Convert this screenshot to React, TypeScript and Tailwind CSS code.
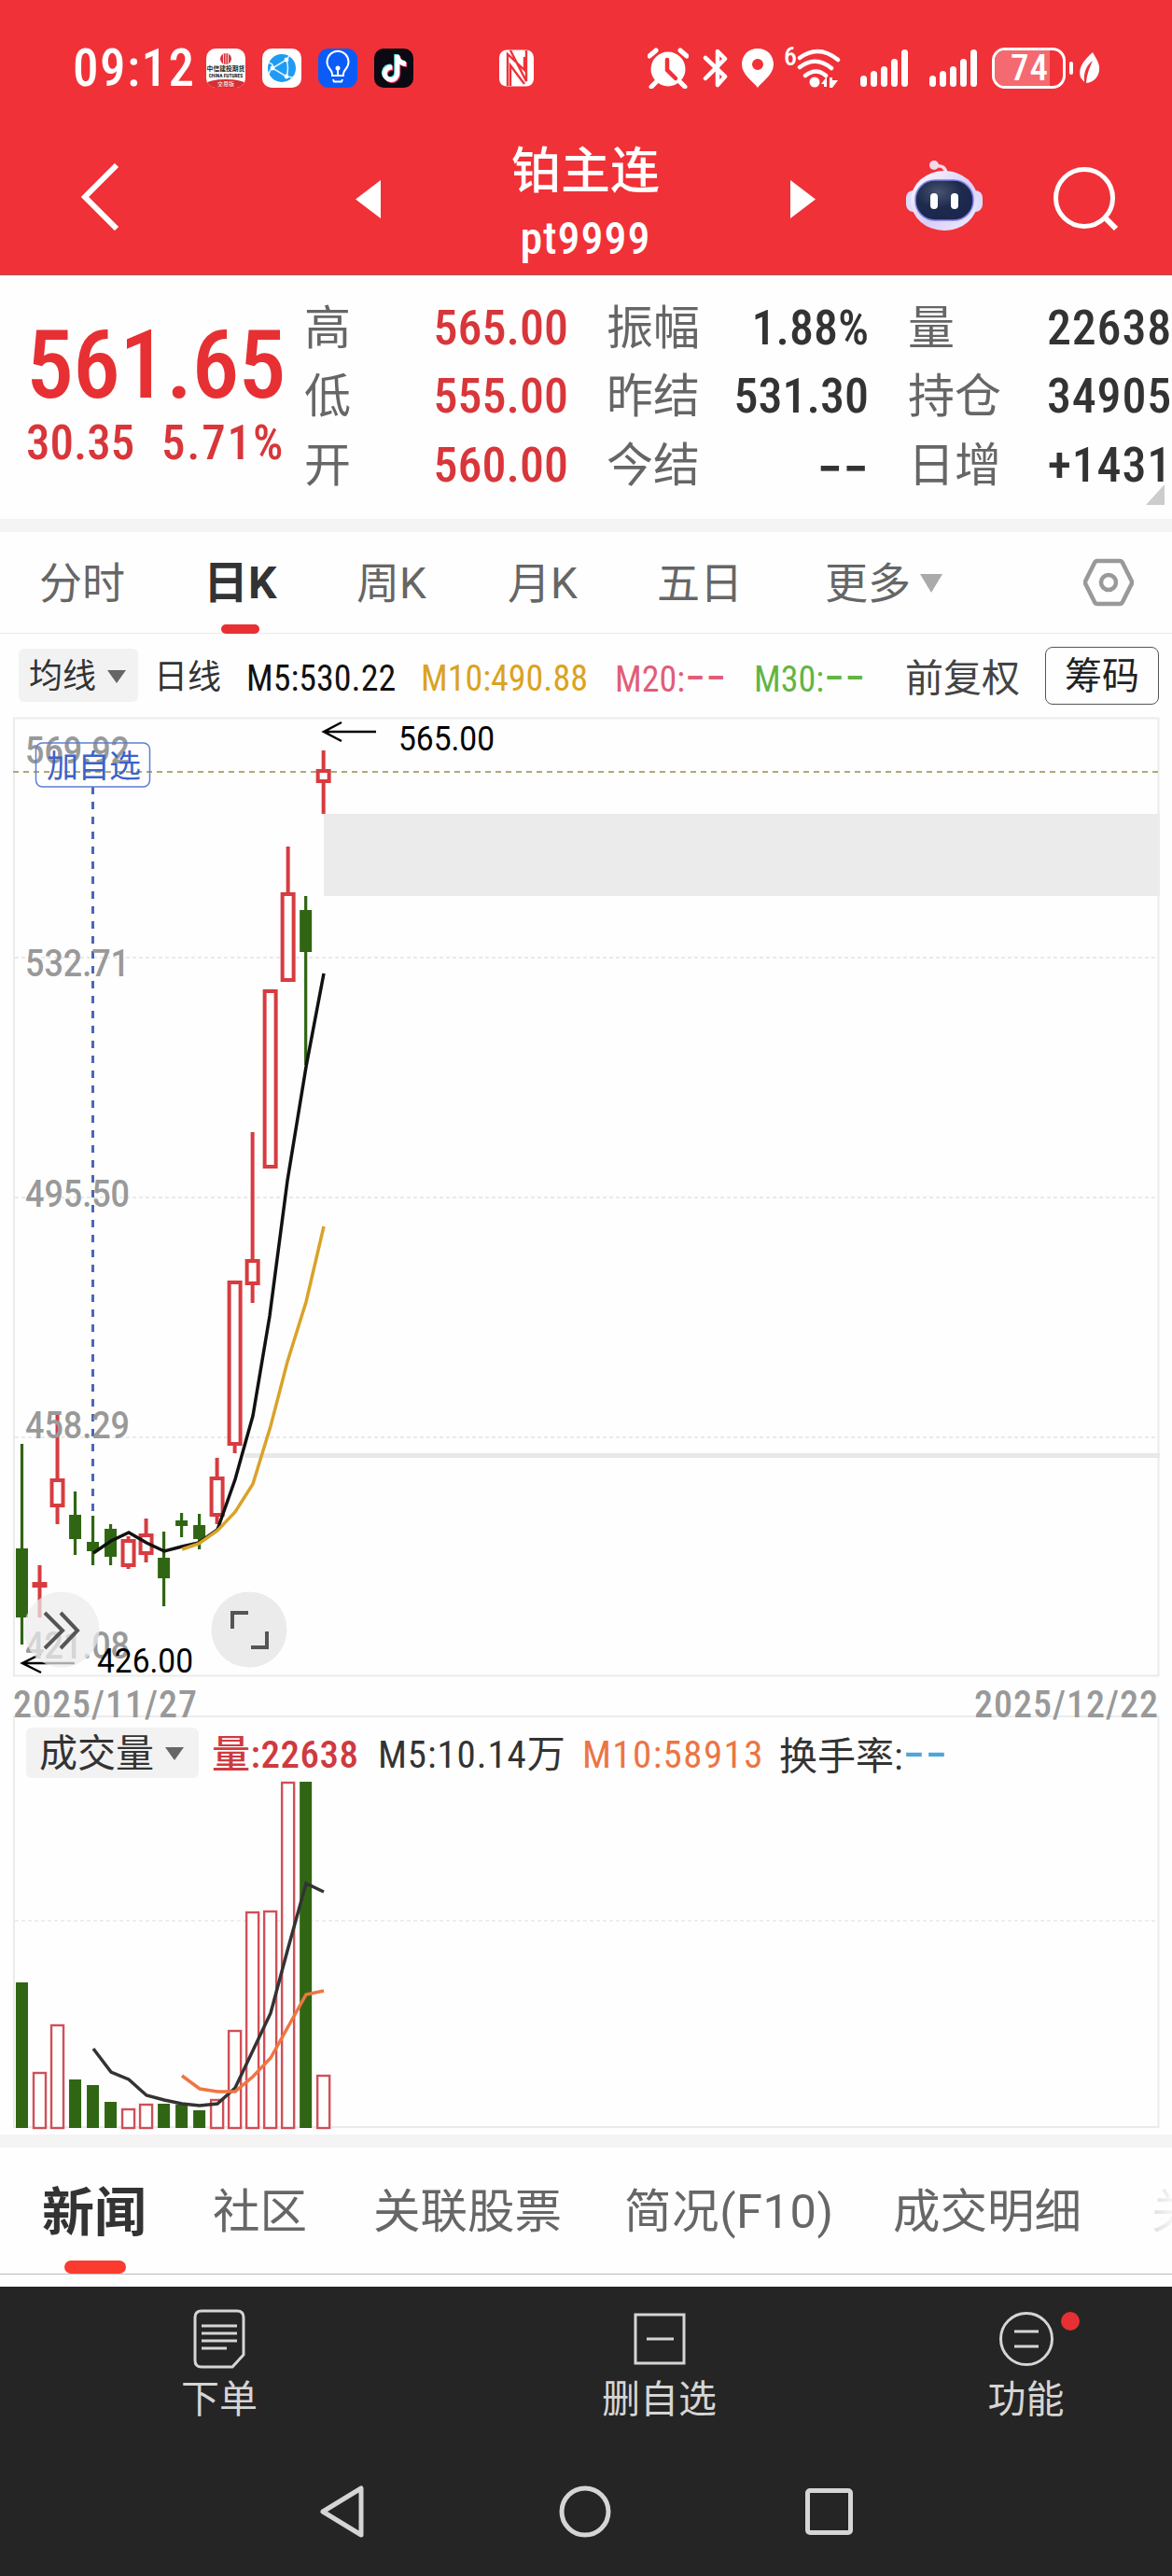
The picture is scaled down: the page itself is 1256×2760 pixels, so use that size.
import { FaTiktok } from "react-icons/fa6";

type Candle = {
  up: boolean;
  high: number;
  low: number;
  top: number;
  bottom: number;
  vol: number;
};

const RED = "#d63c40";
const GREEN = "#306613";

const candles: Candle[] = [
  { up: false, high: 1547, low: 1762, top: 1659, bottom: 1733, vol: 2124 },
  { up: true, high: 1677, low: 1733, top: 1695, bottom: 1701, vol: 2220 },
  { up: true, high: 1515, low: 1633, top: 1584, bottom: 1615, vol: 2169 },
  { up: false, high: 1598, low: 1666, top: 1623, bottom: 1649, vol: 2228 },
  { up: false, high: 1624, low: 1677, top: 1652, bottom: 1662, vol: 2234 },
  { up: false, high: 1633, low: 1677, top: 1638, bottom: 1668, vol: 2252 },
  { up: true, high: 1646, low: 1681, top: 1649, bottom: 1679, vol: 2259 },
  { up: true, high: 1627, low: 1674, top: 1643, bottom: 1666, vol: 2254 },
  { up: false, high: 1641, low: 1721, top: 1669, bottom: 1691, vol: 2254 },
  { up: false, high: 1621, low: 1647, top: 1629, bottom: 1635, vol: 2255 },
  { up: false, high: 1622, low: 1660, top: 1634, bottom: 1649, vol: 2261 },
  { up: true, high: 1562, low: 1633, top: 1582, bottom: 1625, vol: 2249 },
  { up: true, high: 1372, low: 1557, top: 1372, bottom: 1549, vol: 2175 },
  { up: true, high: 1213, low: 1396, top: 1349, bottom: 1377, vol: 2048 },
  { up: true, high: 1060, low: 1252, top: 1060, bottom: 1252, vol: 2047 },
  { up: true, high: 907, low: 1052, top: 956, bottom: 1052, vol: 1909 },
  { up: false, high: 960, low: 1141, top: 975, bottom: 1020, vol: 1909 },
  { up: true, high: 804, low: 872, top: 824, bottom: 839, vol: 2223 },
];

const cx = (i: number) => 23.5 + i * 19.01;

const quotes = [
  ["高", "565.00", "振幅", "1.88%", "量", "22638"],
  ["低", "555.00", "昨结", "531.30", "持仓", "34905"],
  ["开", "560.00", "今结", "--", "日增", "+1431"],
];

const priceLabels = [
  { text: "569.92", y: 818 },
  { text: "532.71", y: 1046 },
  { text: "495.50", y: 1293 },
  { text: "458.29", y: 1541 },
  { text: "421.08", y: 1777 },
];

function Dashes({ className }: { className?: string }) {
  return <span className={`[font-family:Inter,sans-serif] ${className ?? ""}`}>--</span>;
}

function Caret({ className }: { className?: string }) {
  return (
    <svg viewBox="0 0 20 14" preserveAspectRatio="none" className={className}>
      <path d="M0 0h20L10 14z" fill="currentColor" />
    </svg>
  );
}

function Signal() {
  return (
    <svg width="52" height="42" viewBox="0 0 52 42" fill="#fff">
      <rect x="0" y="29" width="7" height="12" rx="3.5" />
      <rect x="11" y="24" width="7" height="17" rx="3.5" />
      <rect x="22" y="19" width="7" height="22" rx="3.5" />
      <rect x="33" y="11" width="7" height="30" rx="3.5" />
      <rect x="44" y="1" width="7" height="40" rx="3.5" />
    </svg>
  );
}

function StatusBar() {
  return (
    <div className="flex h-[46px] items-center pl-[78px] text-white">
      <span className="w-[143px] text-[55px] leading-none font-medium tracking-[1.5px] font-stretch-[85%]">09:12</span>
      <div className="flex w-[314px] gap-[18px]">
        <div className="flex size-[42px] flex-col items-center overflow-hidden rounded-[10px] bg-white">
          <svg width="14" height="12" viewBox="0 0 14 12" className="mt-[5px] shrink-0">
            <circle cx="7" cy="6" r="6" fill="#d8323c" />
            <path d="M4.5 1v10M7 0v12M9.5 1v10" stroke="#fff" strokeWidth=".8" />
          </svg>
          <span className="mt-[2px] text-[6.8px] leading-[7px] font-bold whitespace-nowrap text-[#222]">中信建投期货</span>
          <span className="text-[5.500px] leading-[6px] font-bold whitespace-nowrap text-[#222] font-stretch-[85%]">CHINA FUTURES</span>
          <span className="mt-px w-full rounded-t-[50%] bg-[#d63035] text-center text-[6px] leading-[10px]">交易版</span>
        </div>
        <svg width="42" height="42" viewBox="0 0 42 42">
          <rect width="42" height="42" rx="10" fill="#fff" />
          <circle cx="21" cy="21" r="15" fill="#1f9bf3" />
          <g stroke="#d9f1ff" strokeWidth="1.6" fill="none">
            <path d="M26 12 11 21l15 9M26 12q3 9 0 18M7 15q6 2 4 6M11 21q-3 2-4 7M26 12l3-4M26 30l7 1" />
          </g>
          <g fill="#fff">
            <circle cx="26" cy="12" r="2.4" />
            <circle cx="11" cy="21" r="2.4" />
            <circle cx="26" cy="30" r="2.4" />
          </g>
        </svg>
        <svg width="42" height="42" viewBox="0 0 42 42" fill="none" stroke="#fff" strokeWidth="2">
          <rect width="42" height="42" rx="11" fill="#0b5cf7" stroke="none" />
          <path d="M15 29v-2q0-2-2.500-5a11.500 11.500 0 1 1 17 0q-2.500 3-2.500 5v2zM16 33l1 2.500h8l1-2.500M21 22v7" />
          <circle cx="21" cy="21" r="2.500" fill="#fff" stroke="none" />
        </svg>
        <div className="relative size-[42px] rounded-[10px] bg-[#0b0912]">
          <FaTiktok className="absolute top-[6px] left-[6px] size-[29px] text-[#5fe6e0]" />
          <FaTiktok className="absolute top-[8px] left-[8px] size-[29px] text-[#f0386b]" />
          <FaTiktok className="absolute top-[7px] left-[7px] size-[29px] text-white" />
        </div>
      </div>
      <svg width="38" height="40" viewBox="0 0 38 40">
        <rect width="37" height="39" rx="8" y=".5" fill="#fff" />
        <path d="M9 39V5l18 17V8M12 1l17 33V1M12 39V17l15 20" fill="none" stroke="#f03138" strokeWidth="2.4" />
      </svg>
      <svg width="44" height="44" viewBox="0 0 44 44" className="ml-[121px]">
        <circle cx="22" cy="23" r="18.500" fill="#fff" />
        <path d="M2 9l7-6M42 9l-7-6M9 37l-5 5M35 37l5 5" stroke="#fff" strokeWidth="5" strokeLinecap="round" />
        <path d="M21 13v11l9 9" fill="none" stroke="#f03138" strokeWidth="4.500" strokeLinecap="round" />
      </svg>
      <svg width="28" height="44" viewBox="0 0 28 44" className="ml-[15px]" fill="none" stroke="#fff" strokeWidth="4.500" strokeLinejoin="round" strokeLinecap="round">
        <path d="M3 11l21 20-8 9V4l8 8L3 33" />
      </svg>
      <svg width="34" height="42" viewBox="0 0 34 42" className="ml-[14px]">
        <path fillRule="evenodd" d="M17 0C7 0 0 7 0 17c0 11 12 18 17 25 5-7 17-14 17-25C34 7 27 0 17 0zm0 11a6 6 0 1 1 0 12 6 6 0 0 1 0-12z" fill="#fff" />
      </svg>
      <span className="-mt-[24px] ml-[11px] w-[14px] text-[28px] leading-none font-medium font-stretch-[85%]">6</span>
      <svg width="48" height="44" viewBox="0 0 48 44" fill="none" stroke="#fff" strokeWidth="4.500">
        <path d="M3 11q20-15 41 2M3 21q17-13 34 1M9 30q12-9 22 0" strokeLinecap="round" />
        <circle cx="19" cy="37" r="5.500" fill="#fff" stroke="none" />
        <path d="M26 39l6-8v11h-3v-3zM35 32h3v3h6l-6 8h-3z" fill="#fff" stroke="none" />
      </svg>
      <div className="ml-[20px] flex gap-[22px]">
        <Signal />
        <Signal />
      </div>
      <div className="ml-[15px] flex h-[44px] w-[79px] overflow-hidden rounded-[14px] border-[3px] border-white">
        <div className="flex w-[59px] items-center bg-[#f56a70] pl-[17px] text-[39px] leading-none font-medium tracking-[1px] font-stretch-[85%]">74</div>
      </div>
      <div className="ml-[4px] h-[14px] w-[4px] rounded-full bg-white" />
      <svg width="22" height="34" viewBox="0 0 22 34" className="ml-[7px]" fill="#fff">
        <path d="M14 0C4 9-2 17 1 27l4 5C4 20 8 14 14 9 11 16 8 22 7 33c10-1 15-9 14-18C20 9 17 6 14 0z" />
      </svg>
    </div>
  );
}

function Robot() {
  return (
    <svg width="82" height="80" viewBox="0 0 82 80">
      <defs>
        <linearGradient id="shell" x1="0" y1="0" x2="1" y2="1">
          <stop offset="0" stopColor="#ffffff" />
          <stop offset=".55" stopColor="#d9cdf7" />
          <stop offset="1" stopColor="#eef1ff" />
        </linearGradient>
        <radialGradient id="visor" cx=".4" cy=".3" r=".8">
          <stop offset="0" stopColor="#47536f" />
          <stop offset=".5" stopColor="#1e2a4c" />
          <stop offset="1" stopColor="#1b2450" />
        </radialGradient>
      </defs>
      <circle cx="30" cy="6" r="5" fill="#f0d9ea" />
      <path d="M31 7q11-2 12 8" fill="none" stroke="#f3dbe8" strokeWidth="3.500" />
      <rect x="0" y="33" width="82" height="23" rx="8" fill="#dcdcfa" />
      <ellipse cx="41" cy="44" rx="36" ry="32" fill="url(#shell)" />
      <rect x="10" y="22" width="62" height="43" rx="21" fill="url(#visor)" stroke="#7c7fe0" strokeWidth="1.500" />
      <rect x="26" y="36" width="8" height="17" rx="4" fill="#fff" />
      <rect x="48" y="36" width="8" height="17" rx="4" fill="#fff" />
    </svg>
  );
}

function Header() {
  return (
    <header className="h-[295px] border-b border-[#b2504f] bg-[#f03138] pt-[50px] text-white">
      <StatusBar />
      <div className="mt-[47px] flex h-[152px] pl-[86px]">
        <svg width="42" height="72" viewBox="0 0 42 72" className="mt-[32px]" fill="none" stroke="#fff" strokeWidth="6">
          <path d="M39 2 5 36l34 34" />
        </svg>
        <svg width="27" height="41" viewBox="0 0 27 41" className="mt-[50px] ml-[253px]" fill="#fff">
          <path d="M27 0v41L0 20.500z" />
        </svg>
        <div className="w-[439px] text-center">
          <div className="mt-[9px] text-[53px] leading-[64px] font-medium">铂主连</div>
          <div className="mt-[4px] text-[48px] leading-[72px] font-medium tracking-[1px] font-stretch-[85%]">pt9999</div>
        </div>
        <svg width="27" height="41" viewBox="0 0 27 41" className="mt-[50px]" fill="#fff">
          <path d="M0 0v41l27-20.500z" />
        </svg>
        <div className="mt-[28px] ml-[97px]">
          <Robot />
        </div>
        <svg width="72" height="72" viewBox="0 0 72 72" className="mt-[34px] ml-[74px]" fill="none" stroke="#fff" strokeWidth="5">
          <circle cx="35" cy="35" r="30.500" />
          <path d="M57 56l12 12" strokeWidth="6" />
        </svg>
      </div>
    </header>
  );
}

function Quotes() {
  return (
    <section className="relative flex h-[261px] bg-[#fefefe]">
      <div className="w-[326px] pl-[28px] text-[#e73033]">
        <div className="mt-[48px] text-[102px] leading-[96px] font-medium tracking-[-1px] whitespace-nowrap font-stretch-[85%]">561.65</div>
        <div className="mt-[8px] flex text-[51px] leading-[56px] whitespace-nowrap text-[#d8363a] font-stretch-[85%]">
          <span className="w-[145px] font-medium">30.35</span>
          <span className="font-medium tracking-[1.8px]">5.71%</span>
        </div>
      </div>
      <div className="flex flex-1 flex-col pt-[20px]">
        {quotes.map((row) => (
          <div
            key={row[0]}
            className="grid h-[73.500px] grid-cols-[80px_203px_41px_100px_181px_42px_110px_173px] items-center text-[50px] leading-none whitespace-nowrap text-[#666]"
          >
            <span>{row[0]}</span>
            <span className="text-right text-[52px] font-medium text-[#d8363a] font-stretch-[85%]">{row[1]}</span>
            <span />
            <span>{row[2]}</span>
            <span className="text-right text-[52px] font-medium text-[#333] font-stretch-[85%]">
              {row[3] === "--" ? <Dashes className="text-[60px]" /> : row[3]}
            </span>
            <span />
            <span>{row[4]}</span>
            <span className="text-right text-[52px] font-medium tracking-[0.8px] text-[#333] font-stretch-[85%]">{row[5]}</span>
          </div>
        ))}
      </div>
      <svg width="20" height="22" viewBox="0 0 20 22" className="absolute right-[8px] bottom-[15px]">
        <path d="M20 0v22H0z" fill="#ccc" />
      </svg>
    </section>
  );
}

function PeriodTabs() {
  return (
    <nav className="flex h-[109px] items-center border-b border-[#e8e8e8] bg-[#fefefe] text-[46px] leading-none text-[#666]">
      <div className="grid w-[1161px] grid-cols-[176px_164px_162px_160px_180px_auto] items-center pt-px pl-[42px]">
        <span>分时</span>
        <span className="relative text-[48px] font-bold text-[#333]">
          日K
          <i className="absolute -bottom-[30px] left-[19px] h-[10px] w-[41px] rounded-full bg-[#e73033]" />
        </span>
        <span>周K</span>
        <span>月K</span>
        <span>五日</span>
        <span className="flex items-center">
          更多
          <Caret className="ml-[10px] h-[20px] w-[24px] text-[#aaa]" />
        </span>
      </div>
      <svg width="54" height="52" viewBox="0 0 54 52" fill="none" stroke="#999" strokeWidth="4.500" strokeLinejoin="round">
        <path d="M15 3h24q2 0 3 2l9 18q2 3 0 6l-9 18q-1 2-3 2H15q-2 0-3-2L3 29q-2-3 0-6L12 5q1-2 3-2z" />
        <circle cx="27" cy="26" r="8" />
      </svg>
    </nav>
  );
}

function AverageRow() {
  return (
    <div className="flex h-[89px] items-center bg-[#fefefe] pl-[20px] text-[38px] leading-[44px] whitespace-nowrap text-[#333] font-stretch-[85%]">
      <div className="flex h-[57px] w-[128px] items-center rounded-[6px] bg-[#f2f2f2] pt-[2px] pl-[11px] text-[36px]">
        均线
        <Caret className="ml-[12px] h-[14px] w-[20px] text-[#666]" />
      </div>
      <span className="w-[98px] pt-[4px] pl-[17px] text-[36px]">日线</span>
      <span className="w-[187px] pt-[6px] pl-[18px] text-[#111]">M5:530.22</span>
      <span className="w-[208px] pt-[6px] pl-[18px] text-[#dba31f]">M10:490.88</span>
      <span className="w-[149px] pt-[4px] pl-[18px] text-[#e25d78]">
        M20:<Dashes className="text-[48px]" />
      </span>
      <span className="w-[164px] pt-[4px] pl-[18px] text-[#62b544]">
        M30:<Dashes className="text-[48px]" />
      </span>
      <span className="w-[166px] pt-[6px] pl-[16px] text-[41px] text-[#444]">前复权</span>
      <div className="flex h-[62px] w-[122px] items-center justify-center rounded-[8px] border border-[#555] pt-[2px] text-[40px] text-[#222]">
        筹码
      </div>
    </div>
  );
}

function PriceChart() {
  return (
    <svg width="1256" height="1029" viewBox="0 768 1256 1029" className="block bg-[#fefefe]">
      <rect x="15" y="769.500" width="1226.500" height="1026" fill="none" stroke="#ebebeb" strokeWidth="2" />
      {[1026, 1283, 1540].map((y) => (
        <path key={y} d={`M16 ${y}H1241`} stroke="#e4e4e4" strokeWidth="1.500" strokeDasharray="4 3" />
      ))}
      <rect x="347" y="872" width="896" height="88" fill="#ebebeb" />
      <rect x="262" y="1557" width="981" height="5" fill="#e8e8e8" />
      <path d="M14 827H1241" stroke="#b0a973" strokeWidth="2" strokeDasharray="6 5" />
      <path d="M99.500 843V1624" stroke="#4a67b8" strokeWidth="3" strokeDasharray="8 8" />

      {candles.map((c, i) =>
        c.up ? (
          <g key={i} stroke={RED} strokeWidth="4" fill="#fefefe">
            <path d={`M${cx(i)} ${c.high}V${c.top}M${cx(i)} ${c.bottom}V${c.low}`} />
            {c.bottom - c.top < 8 ? (
              <rect x={cx(i) - 8} y={c.top} width="16" height={c.bottom - c.top} fill={RED} stroke="none" />
            ) : (
              <rect x={cx(i) - 6} y={c.top + 2} width="12" height={c.bottom - c.top - 4} />
            )}
          </g>
        ) : (
          <g key={i} fill={GREEN}>
            <rect x={cx(i) - 1.6} y={c.high} width="3.200" height={c.low - c.high} />
            <rect x={cx(i) - 6.5} y={c.top} width="13" height={c.bottom - c.top} />
          </g>
        )
      )}

      <polyline
        points="100,1664 119,1651 138,1642 157,1653 176,1662 195,1657 213,1653 233,1639 252,1585 271,1517 289,1410 308,1265 328,1143 347,1043"
        fill="none"
        stroke="#111"
        strokeWidth="3.500"
      />
      <polyline
        points="195,1660 213,1654 233,1640 252,1620 271,1590 290,1528 308,1459 328,1395 347,1314"
        fill="none"
        stroke="#d9a22a"
        strokeWidth="3.500"
      />

      <g fill="none" stroke="#000" strokeWidth="2.500">
        <path d="M403 784H347M366 774l-19 10 19 10" />
        <path d="M80 1782H24M44 1772l-20 10 20 10" />
      </g>

      <g fontSize="41" fontWeight="500" fill="#999">
        {priceLabels.map((l) => (
          <text key={l.text} x="27" y={l.y} textLength="112" lengthAdjust="spacingAndGlyphs">
            {l.text}
          </text>
        ))}
      </g>
      <rect x="38.500" y="796" width="122" height="47" rx="7" fill="none" stroke="#5c7fd0" strokeWidth="1.500" />
      <text x="50" y="833" fontSize="34" textLength="101" fill="#3c62c9">
        加自选
      </text>
      <g fontSize="36" fill="#000">
        <text x="427" y="804" textLength="103" lengthAdjust="spacingAndGlyphs">
          565.00
        </text>
        <text x="104" y="1792" textLength="103" lengthAdjust="spacingAndGlyphs">
          426.00
        </text>
      </g>

      <g fill="#ebebeb" fillOpacity=".72">
        <circle cx="66" cy="1746" r="40.500" />
        <circle cx="267" cy="1746" r="40.500" fillOpacity="1" />
      </g>
      <g fill="none" stroke="#555" strokeWidth="4">
        <path d="M48 1728l19 19-19 19M65 1728l18 19-18 19" />
        <path d="M249 1745v-17h17M286 1748v17h-17" />
      </g>
    </svg>
  );
}

function VolumeChart() {
  return (
    <section className="relative h-[449px] bg-[#fefefe]">
      <svg width="1256" height="449" viewBox="0 1838 1256 449" className="absolute inset-0">
        <rect x="15" y="1839" width="1226.500" height="440" fill="none" stroke="#ebebeb" strokeWidth="2" />
        <path d="M16 2058H1241" stroke="#ddd" strokeDasharray="4 3" />
        {candles.map((c, i) =>
          c.up ? (
            <rect key={i} x={cx(i) - 6.5} y={c.vol + 1} width="13" height={2279 - c.vol} fill="#fefefe" stroke="#cf5058" strokeWidth="2.400" />
          ) : (
            <rect key={i} x={cx(i) - 6.5} y={c.vol} width="13" height={2280 - c.vol} fill={GREEN} />
          )
        )}
        <polyline
          points="100,2195 119,2220 138,2228 157,2245 176,2250 195,2254 214,2256 233,2254 252,2237 271,2197 290,2157 308,2090 328,2018 347,2027"
          fill="none"
          stroke="#333"
          strokeWidth="3.500"
        />
        <polyline
          points="195,2224 214,2238 233,2241 252,2241 271,2225 290,2205 309,2171 328,2137 347,2133"
          fill="none"
          stroke="#ee7642"
          strokeWidth="3.500"
        />
      </svg>
      <div className="relative flex h-[80px] items-center pl-[28px] text-[41px] leading-[46px] whitespace-nowrap text-[#333] font-stretch-[85%]">
        <div className="flex h-[54px] w-[185px] items-center rounded-[6px] bg-[#f2f2f2] pt-[2px] pl-[14px]">
          成交量
          <Caret className="ml-[12px] h-[14px] w-[20px] text-[#666]" />
        </div>
        <span className="w-[192px] pt-[3px] pl-[14px] font-medium tracking-[0.5px] text-[#cf3a3f]">量:22638</span>
        <span className="w-[219px] pt-[3px] tracking-[0.9px]">M5:10.14万</span>
        <span className="w-[211px] pt-[3px] tracking-[1.400px] text-[#ec7544]">M10:58913</span>
        <span className="pt-[3px]">
          换手率:<Dashes className="text-[52px] text-[#4ea5d9]" />
        </span>
      </div>
    </section>
  );
}

function NewsTabs() {
  return (
    <nav className="grid h-[136px] grid-cols-[183px_172px_269px_288px_277px_60px] items-center overflow-hidden border-b border-[#bbb] bg-[#fefefe] pt-[4px] pl-[45px] text-[50.5px] leading-none whitespace-nowrap text-[#666]">
      <span className="relative text-[56px] font-bold text-[#333]">
        新闻
        <i className="absolute -bottom-[37px] left-[24px] h-[14px] w-[66px] rounded-full bg-[#fb3b30]" />
      </span>
      <span>社区</span>
      <span>关联股票</span>
      <span className="tracking-[0.6px]">简况(F10)</span>
      <span>成交明细</span>
      <span className="bg-gradient-to-r from-[#ddd] to-[#fefefe] to-50% bg-clip-text text-transparent">关</span>
    </nav>
  );
}

function BottomBar() {
  return (
    <footer className="h-[310px] bg-[#252525] text-[41px] leading-none text-[#d5d5d5]">
      <div className="flex pt-[24px]">
        <div className="flex w-[470px] flex-col items-center gap-[13px]">
          <svg width="56" height="64" viewBox="0 0 56 64" fill="none" stroke="currentColor" strokeWidth="3">
            <path d="M9 2h38q7 0 7 7v40L42 62H9q-7 0-7-7V9q0-7 7-7z" />
            <path d="M9 18h38M9 26h38M9 34h38M9 42h27" />
          </svg>
          下单
        </div>
        <div className="flex w-[473px] flex-col items-center gap-[13px]">
          <svg width="56" height="64" viewBox="0 0 56 64" fill="none" stroke="currentColor" strokeWidth="3">
            <path d="M2 6h52v52H2zM14 32h29" />
          </svg>
          删自选
        </div>
        <div className="relative flex w-[313px] flex-col items-center gap-[13px]">
          <svg width="60" height="64" viewBox="0 0 60 64" fill="none" stroke="currentColor" strokeWidth="3">
            <circle cx="30" cy="32" r="27.500" />
            <path d="M17 24h26M17 40h26" />
          </svg>
          功能
          <i className="absolute top-[3px] left-[194px] size-5 rounded-full bg-[#e73033]" />
        </div>
      </div>
      <div className="mt-[70px] flex items-center pl-[342px]">
        <svg width="50" height="58" viewBox="0 0 50 58" fill="none" stroke="currentColor" strokeWidth="5" strokeLinejoin="round">
          <path d="M45 4v50L4 29z" />
        </svg>
        <svg width="56" height="56" viewBox="0 0 56 56" className="ml-[207px]" fill="none" stroke="currentColor" strokeWidth="5">
          <circle cx="28" cy="28" r="25" />
        </svg>
        <div className="ml-[208px] h-[50px] w-[51px] rounded-[5px] border-[5px] border-current" />
      </div>
    </footer>
  );
}

export default function App() {
  return (
    <div className="h-[2760px] w-[1256px] overflow-hidden bg-[#fefefe] [font-family:Roboto,'Noto_Sans_CJK_SC',sans-serif]">
      <Header />
      <Quotes />
      <div className="h-[14px] bg-[#f4f4f4]" />
      <PeriodTabs />
      <AverageRow />
      <PriceChart />
      <div className="relative z-10 flex h-[41px] items-center justify-between pt-[18px] pr-[14px] pl-[14px] text-[40px] leading-none font-medium tracking-[1px] text-[#999] font-stretch-[85%]">
        <span>2025/11/27</span>
        <span>2025/12/22</span>
      </div>
      <VolumeChart />
      <div className="h-[14px] bg-[#f4f4f4]" />
      <NewsTabs />
      <div className="h-[13px]" />
      <BottomBar />
    </div>
  );
}
